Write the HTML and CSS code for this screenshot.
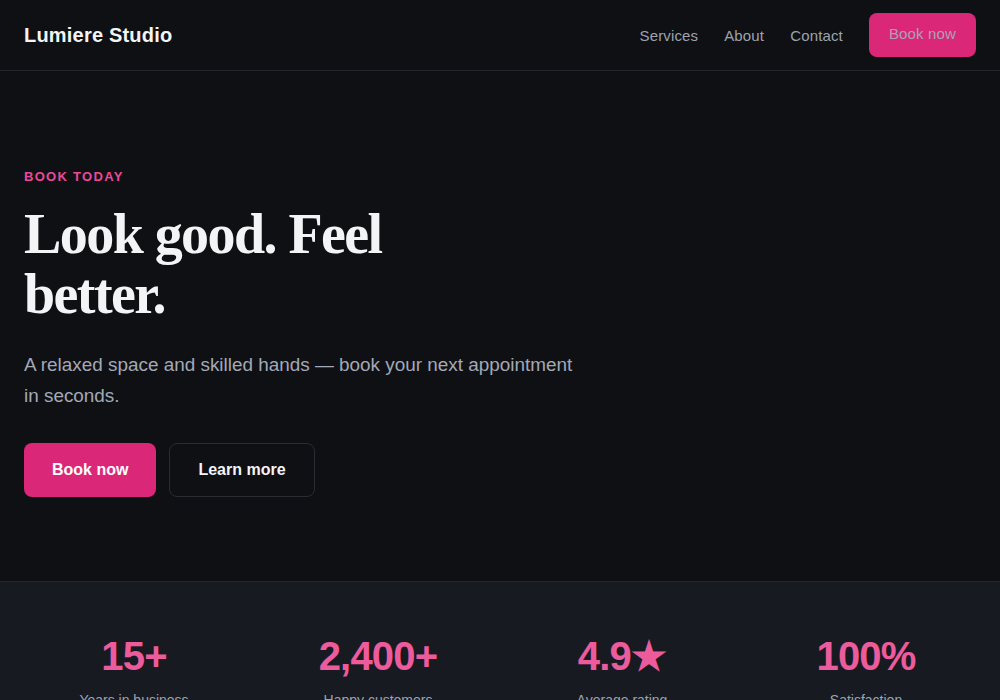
FILE: index.html
```html
<!DOCTYPE html>
<html lang="en">
<head>
<meta charset="utf-8">
<title>Lumiere Studio</title>
<link rel="stylesheet" href="styles.css">
</head>
<body>
<header class="nav">
  <div class="logo">Lumiere Studio</div>
  <nav class="links">
    <a href="#">Services</a>
    <a href="#">About</a>
    <a href="#">Contact</a>
    <a href="#" class="nav-btn">Book now</a>
  </nav>
</header>
<section class="hero">
  <div class="eyebrow">BOOK TODAY</div>
  <h1 class="title">Look good. Feel better.</h1>
  <p class="lead">A relaxed space and skilled hands — book your next appointment in seconds.</p>
  <div class="actions">
    <a href="#" class="btn btn-primary">Book now</a>
    <a href="#" class="btn btn-ghost">Learn more</a>
  </div>
</section>
<section class="stats">
  <div class="stat"><div class="num">15+</div><div class="label">Years in business</div></div>
  <div class="stat"><div class="num">2,400+</div><div class="label">Happy customers</div></div>
  <div class="stat"><div class="num">4.9★</div><div class="label">Average rating</div></div>
  <div class="stat"><div class="num">100%</div><div class="label">Satisfaction</div></div>
</section>
</body>
</html>
```
FILE: styles.css
```css
* { box-sizing: border-box; }
html, body { margin: 0; padding: 0; }
body {
  background: #0f1014;
  color: #f3f4f6;
  font-family: "Liberation Sans", Arial, sans-serif;
}
a { text-decoration: none; color: inherit; }

.nav {
  height: 71px;
  display: flex;
  align-items: center;
  justify-content: space-between;
  padding: 0 24px;
  border-bottom: 1px solid #25262d;
}
.logo {
  font-size: 20px;
  font-weight: 700;
  letter-spacing: 0.2px;
  color: #f3f4f6;
}
.links {
  display: flex;
  align-items: center;
  gap: 26px;
  font-size: 15px;
  letter-spacing: 0.15px;
  color: #9ca3af;
}
.nav-btn {
  background: #db2777;
  color: #a9a3b8;
  border-radius: 8px;
  padding: 12px 20px 14px;
  line-height: 18px;
}

.hero {
  padding: 96px 24px 84px;
  border-bottom: 1px solid #25262d;
}
.eyebrow {
  color: #ec4899;
  font-size: 13px;
  font-weight: 700;
  letter-spacing: 0.1em;
  line-height: 20px;
}
.title {
  font-family: "Liberation Serif", "Times New Roman", serif;
  font-weight: 700;
  font-size: 56px;
  line-height: 60px;
  letter-spacing: -0.028em;
  margin: 17px 0 0;
  max-width: 500px;
  color: #f3f4f6;
}
.lead {
  font-size: 18.9px;
  line-height: 31px;
  color: #a3a9b6;
  max-width: 560px;
  margin: 25px 0 0;
}
.actions {
  display: flex;
  gap: 13px;
  margin-top: 32px;
}
.btn {
  font-size: 16px;
  font-weight: 700;
  line-height: 20px;
  border-radius: 8px;
  color: #ffffff;
}
.btn-primary { background: #db2777; padding: 17px 28px; }
.btn-ghost { border: 1px solid #2a2b33; padding: 16px 28px; color: #f3f4f6; }

.stats {
  background: #181a21;
  padding: 50px 24px 40px;
  display: grid;
  grid-template-columns: repeat(4, 1fr);
  gap: 24px;
  min-height: 200px;
}
.stat { text-align: center; }
.num {
  font-size: 40px;
  font-weight: 700;
  line-height: 48px;
  letter-spacing: -0.02em;
  color: #ec5b9c;
}
.label {
  margin-top: 10px;
  font-size: 14px;
  line-height: 20px;
  color: #9ca3af;
}
```
